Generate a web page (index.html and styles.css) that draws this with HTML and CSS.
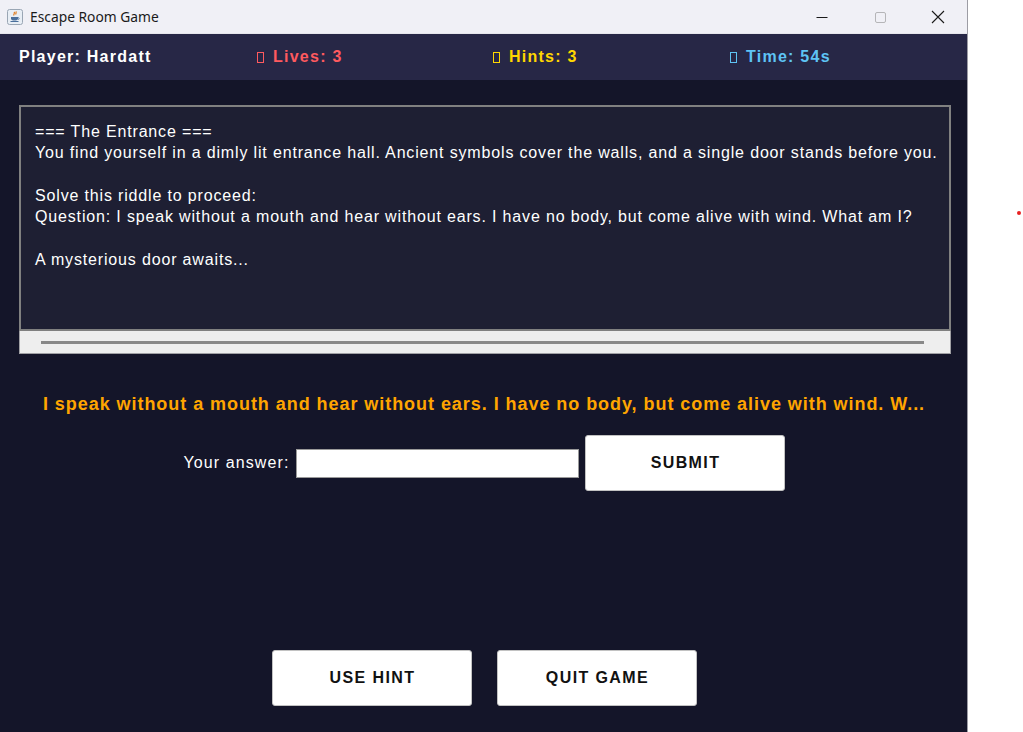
FILE: index.html
```html
<!DOCTYPE html>
<html>
<head>
<meta charset="utf-8">
<title>Escape Room Game</title>
<link rel="stylesheet" href="styles.css">
</head>
<body>
<div class="screen">
  <div class="window">
    <div class="titlebar">
      <div class="app-title">
        <svg class="app-icon" width="16" height="16" viewBox="0 0 16 16">
          <rect x="0.5" y="0.5" width="15" height="15" rx="2" fill="#e8eef5" stroke="#9aa6b4"/>
          <path d="M7 3c1.5 1.2-1 2 0 3.5M8.8 2.5c1 1-0.5 1.8 0.2 3" stroke="#e07a1a" stroke-width="1.2" fill="none"/>
          <path d="M4 8h7v1.5c0 1.4-1.3 2-3.5 2S4 10.9 4 9.5z" fill="#4a6f9c"/>
          <path d="M3.5 12.5h8" stroke="#4a6f9c" stroke-width="1"/>
          <path d="M11 8.5c1.5 0 1.5 2 0 2" stroke="#4a6f9c" fill="none" stroke-width="0.8"/>
        </svg>
        <span>Escape Room Game</span>
      </div>
      <div class="controls">
        <span class="ctl"><svg width="12" height="12" viewBox="0 0 12 12"><path d="M0.5 6.5h11" stroke="#1a1a1a" stroke-width="1"/></svg></span>
        <span class="ctl"><svg width="12" height="12" viewBox="0 0 12 12"><rect x="1.5" y="1.5" width="10" height="10" rx="1.5" fill="none" stroke="#b5b5b8" stroke-width="1"/></svg></span>
        <span class="ctl"><svg width="14" height="14" viewBox="0 0 14 14"><path d="M1 1l12 12M13 1L1 13" stroke="#1a1a1a" stroke-width="1.1"/></svg></span>
      </div>
    </div>
    <div class="status">
      <span class="stat player">Player: Hardatt</span>
      <span class="stat lives"><span class="box"></span>Lives: 3</span>
      <span class="stat hints"><span class="box"></span>Hints: 3</span>
      <span class="stat time"><span class="box"></span>Time: 54s</span>
    </div>
    <main class="content">
      <div class="panel">
        <div class="story">
          <p>=== The Entrance ===</p>
          <p>You find yourself in a dimly lit entrance hall. Ancient symbols cover the walls, and a single door stands before you.</p>
          <p>&nbsp;</p>
          <p>Solve this riddle to proceed:</p>
          <p>Question: I speak without a mouth and hear without ears. I have no body, but come alive with wind. What am I?</p>
          <p>&nbsp;</p>
          <p>A mysterious door awaits...</p>
        </div>
        <div class="hscroll"><div class="thumb"></div></div>
      </div>
      <div class="riddle">I speak without a mouth and hear without ears. I have no body, but come alive with wind. W...</div>
      <div class="answer-row">
        <label class="answer-label" for="answer">Your answer:</label>
        <input id="answer" class="answer-input" type="text">
        <button class="btn">SUBMIT</button>
      </div>
      <div class="actions">
        <button class="btn">USE HINT</button>
        <button class="btn">QUIT GAME</button>
      </div>
    </main>
  </div>
  <div class="dot"></div>
</div>
</body>
</html>
```
FILE: styles.css
```css
html, body {
  margin: 0;
  padding: 0;
  background: #ffffff;
}
.screen {
  position: relative;
  width: 1023px;
  height: 732px;
  overflow: hidden;
}
.window {
  width: 967px;
  height: 732px;
  border-right: 1px solid #9c9ca4;
  display: flex;
  flex-direction: column;
  background: #141529;
}
.titlebar {
  height: 33px;
  background: #f0f0f6;
  display: flex;
  align-items: center;
  justify-content: space-between;
  font-family: "Noto Sans", "Open Sans", sans-serif;
  font-size: 13.8px;
  color: #1a1a1a;
  border-bottom: 1px solid #e6e6ec;
}
.app-title {
  display: flex;
  align-items: center;
  gap: 7px;
  padding-left: 7px;
}
.app-icon { display: block; }
.controls {
  display: flex;
  height: 100%;
}
.ctl {
  width: 58px;
  display: flex;
  align-items: center;
  justify-content: center;
}
.ctl svg { display: block; }
.status {
  height: 46px;
  background: #272746;
  display: grid;
  grid-template-columns: 238px 236px 237px 237px;
  padding-left: 19px;
  align-items: center;
  font-family: "Liberation Sans", Arial, sans-serif;
  font-weight: bold;
  font-size: 16px;
  letter-spacing: 1.25px;
}
.stat { display: flex; align-items: center; }
.player { color: #ffffff; }
.lives { color: #ff5a5f; }
.hints { color: #ffd700; }
.time { color: #5ec4f5; }
.box {
  display: inline-block;
  width: 7px;
  height: 11px;
  border: 1px solid currentColor;
  margin-right: 9px;
  box-sizing: border-box;
}
.content {
  flex: 1;
  display: flex;
  flex-direction: column;
  align-items: center;
  padding-top: 25px;
  padding-left: 1px;
}
.panel {
  width: 932px;
  margin-left: 2px;
}
.story {
  height: 226px;
  box-sizing: border-box;
  border: 2px solid #808080;
  background: #1e1f33;
  padding: 14px 10px 0 14px;
  font-family: "Liberation Sans", Arial, sans-serif;
  font-size: 16px;
  letter-spacing: 0.84px;
  line-height: 21.33px;
  color: #ffffff;
  white-space: nowrap;
  overflow: hidden;
}
.story p { margin: 0; }
.hscroll {
  height: 23px;
  box-sizing: border-box;
  background: #eeeeee;
  border: 1px solid #a0a0a4;
  border-top: none;
  display: flex;
  align-items: center;
  padding-left: 21px;
  padding-top: 1px;
}
.thumb {
  width: 883px;
  height: 3px;
  background: #888888;
}
.riddle {
  margin-top: 39px;
  font-family: "Liberation Sans", Arial, sans-serif;
  font-weight: bold;
  font-size: 18px;
  letter-spacing: 0.95px;
  line-height: 22px;
  color: #ffa500;
  white-space: nowrap;
}
.answer-row {
  margin-top: 20px;
  display: flex;
  align-items: center;
}
.answer-label {
  font-family: "Liberation Sans", Arial, sans-serif;
  font-size: 16px;
  letter-spacing: 1.1px;
  color: #ffffff;
  margin-right: 6px;
}
.answer-input {
  width: 283px;
  height: 29px;
  box-sizing: border-box;
  border: 1px solid #9a9a9a;
  background: #ffffff;
  margin: 0 6px 0 0;
  padding: 0 4px;
  outline: none;
}
.btn {
  width: 200px;
  height: 56px;
  box-sizing: border-box;
  background: #ffffff;
  border: 1px solid #c2c2c2;
  border-radius: 3px;
  font-family: "Liberation Sans", Arial, sans-serif;
  font-weight: bold;
  font-size: 16px;
  letter-spacing: 1.4px;
  color: #111111;
  padding: 0 0 0 2px;
  margin: 0;
}
.actions {
  margin-top: 159px;
  display: flex;
  gap: 25px;
}
.dot {
  position: absolute;
  left: 1017px;
  top: 211px;
  width: 4px;
  height: 4px;
  border-radius: 50%;
  background: #e82020;
}
```
